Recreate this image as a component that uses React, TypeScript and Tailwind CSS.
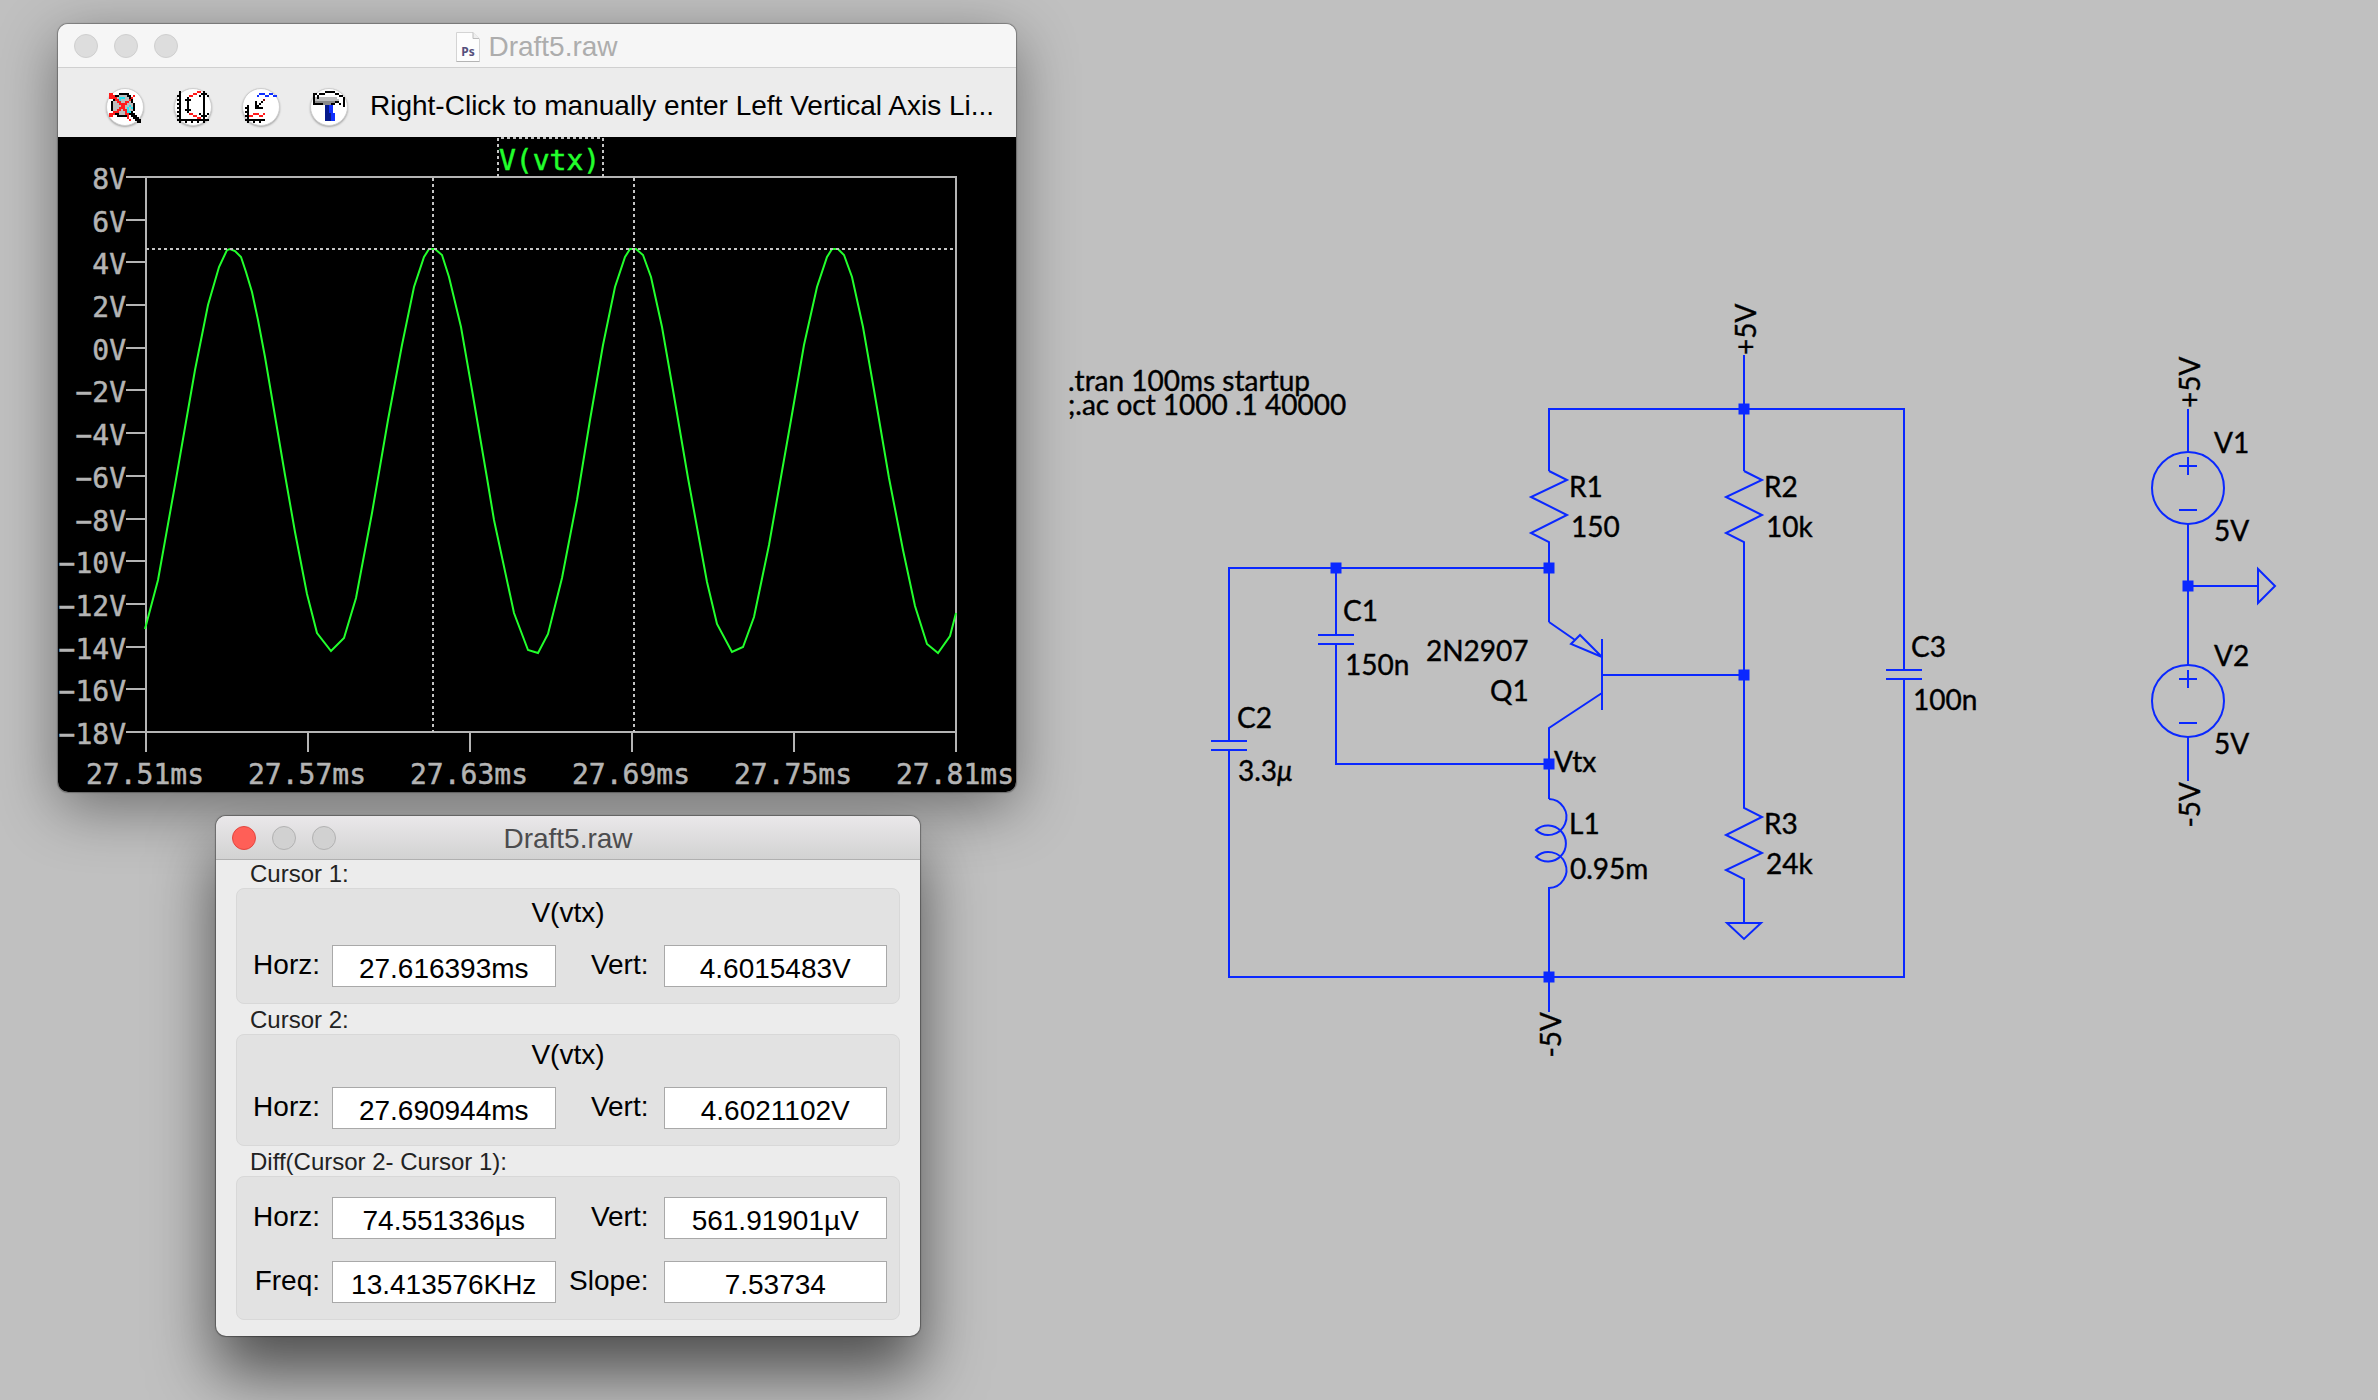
import type { ReactNode } from 'react'

const palette: Record<string, string> = {
    k: '#000000',
    r: '#ff1a1a',
    g: '#bdbdbd',
    d: '#8a8a8a',
    c: '#22e5f2',
    b: '#1030ff',
    n: '#061a8c',
    m: '#7a1010',
    w: '#ffffff',
}

const zoomIcon = [
    '................',
    'rr...kkkkk......',
    'rrrkkggggkk.r...',
    'rrrrgcccggkr....',
    '..krrcggggrk....',
    '.kggrrggrrgk....',
    '.kgggrrrrgggk...',
    '.kggggrrggcgk...',
    '.kgggrrrgcgck...',
    '.kggrrgrrcggk...',
    '..rrrgggrcck....',
    'rrrkkgggrrkkk...',
    'rr..kkkkkr.kkk..',
    '.........r..kkk.',
    '..........r..kkk',
    '..............kk',
]

const axesIcon = [
    '.k........rr.k..',
    '.k......rr..kkk.',
    'kk....rr...k.k.k',
    '.k...k.......k..',
    'kk..kkk......k..',
    '.k...k.......k..',
    'kk...k.......k..',
    '.k...k.......k..',
    'kk...k.......k..',
    '.k..kkk......k..',
    'kk...k.......k..',
    '.k....rr...k.k.k',
    'kk......rr..kkk.',
    '.k........rr.k..',
    'kkkkkkkkkkkkkkkk',
    '.k..k..k..k..k..',
]

const autoIcon = [
    '................',
    '.......bbb..bb..',
    '......b...bb..bb',
    '................',
    '.........m......',
    '.....k..k.......',
    '.....k.k........',
    '.k...kk.........',
    'kk...kkkk.......',
    '.k..............',
    'kk..............',
    '.k..rrr..r......',
    'kkrr...rr.......',
    '.k..............',
    'kkkkkkkkkk......',
    '.k..k..k........',
]

const hammerIcon = [
    '......kkkkk.....',
    'kk.kkkwwwwwkk...',
    'kwkwwwwwwwwwwkk.',
    'kgkgggggggggwwwk',
    'kggggggggggggwwk',
    'kddddddddddkkwwk',
    'kkkkkddddkk..kwk',
    '......nnbb.....k',
    '......nnbb......',
    '......nnbb......',
    '......nnbb......',
    '......nnnbb.....',
    '......nnnbb.....',
    '......nnnbb.....',
    '......nnnbb.....',
    '................',
]

const tools = [
    { name: 'Zoom to fit', rows: zoomIcon },
    { name: 'Pick visible traces', rows: axesIcon },
    { name: 'Autorange', rows: autoIcon },
    { name: 'Control panel', rows: hammerIcon },
]

function PixelIcon({ rows }: { rows: string[] }) {
    return (
        <svg viewBox="0 0 16 16" className="h-8 w-8" shapeRendering="crispEdges" aria-hidden="true">
            {rows.flatMap((row, y) =>
                [...row].map((ch, x) =>
                    palette[ch] ? <rect key={`${x}-${y}`} x={x} y={y} width="1" height="1" fill={palette[ch]} /> : null
                )
            )}
        </svg>
    )
}

function TitleBar({ active, children }: { active?: boolean; children: ReactNode }) {
    const light = active ? 'border-[#b2b2b2] bg-[#d1d1d1]' : 'border-[#cfcfcf] bg-[#dddddd]'
    return (
        <header
            className={
                active
                    ? 'grid h-11 grid-cols-[1fr_auto_1fr] items-center rounded-t-[10px] border-b border-[#b0b0b0] bg-linear-to-b from-[#eae8ea] to-[#d2d2d2] px-4 text-[#4c4c4e]'
                    : 'grid h-11 grid-cols-[1fr_auto_1fr] items-center rounded-t-[10px] border-b border-[#d0d0d0] bg-[#f6f6f6] px-4 text-[#adadad]'
            }
        >
            <div className="flex gap-4">
                <button
                    aria-label="Close"
                    className={`size-6 rounded-full border ${active ? 'border-[#e2463f] bg-[#ff5f57]' : light}`}
                />
                <button aria-label="Minimize" className={`size-6 rounded-full border ${light}`} />
                <button aria-label="Zoom" className={`size-6 rounded-full border ${light}`} />
            </div>
            <h2 className="flex items-center gap-2 pt-0.5 text-[28px] leading-9">{children}</h2>
        </header>
    )
}

function DocIcon() {
    return (
        <svg width="24" height="30" viewBox="0 0 24 30" aria-hidden="true">
            <path d="M0.5 0.5H17L23.5 7V29.5H0.5Z" fill="#fdfdfd" stroke="#d4d4d4" />
            <path d="M17 0.5V6.5H23" fill="#eeeeee" stroke="#bdbdbd" />
            <path d="M0.5 29.5H23.5" stroke="#b4b4b4" />
            <text x="12" y="24" textAnchor="middle" fontSize="12" fontWeight="700" fill="#55507c" fontFamily="Noto Sans, sans-serif">
                Ps
            </text>
        </svg>
    )
}

const trace =
    '145,629 158,580 175,485 195,370 208,305 219,267 227,250 230,249 235,251 241,257 246,272 252,292 258,320 265,357 ' +
    '285,475 295,532 307,594 317,633 331,651 344,638 356,598 372,513 388,420 402,345 414,287 424,257 429,249 435,249 ' +
    '442,255 449,277 461,327 472,390 487,478 494,520 514,613 528,650 538,653 548,634 562,578 577,500 590,420 603,345 ' +
    '615,287 625,257 630,249 636,249 643,255 651,277 662,327 673,390 688,478 707,582 717,624 732,652 743,647 ' +
    '754,617 769,545 791,420 804,345 817,287 827,257 832,249 838,249 844,255 852,277 863,327 874,390 889,478 ' +
    '903,550 915,606 927,644 938,653 950,636 956,613'

const volts = [8, 6, 4, 2, 0, -2, -4, -6, -8, -10, -12, -14, -16, -18]
const times = ['27.51ms', '27.57ms', '27.63ms', '27.69ms', '27.75ms', '27.81ms']

function Plot() {
    const yOf = (v: number) => Math.round(177 + ((8 - v) * 555) / 26)
    return (
        <svg
            viewBox="58 137 958 655"
            className="block h-auto w-full rounded-b-[10px] bg-black font-['DejaVu_Sans_Mono',monospace] text-[28px]"
            role="img"
            aria-label="V(vtx) over time"
        >
            <g stroke="#b4b4b4" strokeWidth="2" fill="none">
                <rect x="146" y="177" width="810" height="555" />
                {volts.map((v) => (
                    <path key={v} d={`M126 ${yOf(v)}H146`} />
                ))}
                {times.map((t, i) => (
                    <path key={t} d={`M${146 + i * 162} 732V752`} />
                ))}
            </g>
            <polyline points={trace} fill="none" stroke="#22ff2c" strokeWidth="2" />
            <g stroke="#c4c4c4" strokeWidth="2" strokeDasharray="3 3" fill="none">
                <path d="M146 249H956" />
                <path d="M433 178V732" />
                <path d="M634 178V732" />
                <path d="M498 177V138H603V177" />
            </g>
            <g fill="#b4b4b4" stroke="#b4b4b4" strokeWidth="0.5" textAnchor="end">
                {volts.map((v) => (
                    <text key={v} x="126" y={yOf(v) + 12}>
                        {`${v < 0 ? '−' : ''}${Math.abs(v)}V`}
                    </text>
                ))}
            </g>
            <g fill="#b4b4b4" stroke="#b4b4b4" strokeWidth="0.5" textAnchor="middle">
                {times.map((t, i) => (
                    <text key={t} x={145 + i * 162} y="784">
                        {t}
                    </text>
                ))}
            </g>
            <text x="499" y="170" fill="#22ff2c" stroke="#22ff2c" strokeWidth="0.5">
                V(vtx)
            </text>
        </svg>
    )
}

function Field({ id, label, value, right }: { id: string; label: string; value: string; right?: boolean }) {
    return (
        <>
            <label htmlFor={id} className={right ? 'pt-0.5 pr-[3px] text-right' : 'pt-0.5 text-right'}>
                {label}
            </label>
            <input
                id={id}
                defaultValue={value}
                className="h-[42px] w-full min-w-0 border border-[#a9a9a9] bg-white pt-1.5 text-center outline-none"
            />
        </>
    )
}

function Group({ title, className, children }: { title: string; className: string; children: ReactNode }) {
    return (
        <section>
            <h3 className="px-3.5 text-2xl leading-7 text-[#222222]">{title}</h3>
            <div className={`rounded-lg border border-[#d8d8d8] bg-[#e2e2e2] ${className}`}>{children}</div>
        </section>
    )
}

const fieldGrid = 'grid grid-cols-[83px_1fr_84px_1fr] gap-x-3 gap-y-[22px] pr-3'

const nodes = [
    [1744, 409],
    [1549, 568],
    [1336, 568],
    [1744, 675],
    [1549, 764],
    [1549, 977],
    [2188, 586],
]

const labels: [number, number, string][] = [
    [1068, 391, '.tran 100ms startup'],
    [1068, 415, ';.ac oct 1000 .1 40000'],
    [1569, 497, 'R1'],
    [1571, 537, '150'],
    [1343, 621, 'C1'],
    [1345, 675, '150n'],
    [1426, 661, '2N2907'],
    [1490, 701, 'Q1'],
    [1554, 772, 'Vtx'],
    [1569, 834, 'L1'],
    [1570, 879, '0.95m'],
    [1237, 728, 'C2'],
    [1238, 781, '3.3'],
    [1764, 497, 'R2'],
    [1766, 537, '10k'],
    [1764, 834, 'R3'],
    [1766, 874, '24k'],
    [1911, 657, 'C3'],
    [1913, 710, '100n'],
    [2214, 453, 'V1'],
    [2214, 541, '5V'],
    [2214, 666, 'V2'],
    [2214, 754, '5V'],
]

function Schematic() {
    return (
        <svg
            viewBox="1040 0 1338 1400"
            className="block h-auto w-full font-['Lato',sans-serif] text-[28px]"
            role="img"
            aria-label="Oscillator schematic"
        >
            <g stroke="#0a28ff" strokeWidth="2" fill="none">
                {/* supply rails */}
                <path d="M1744 355V471M1549 471V409H1904V670M1886 670H1922M1886 679H1922M1904 679V977H1229V750" />
                <path d="M1211 741H1247M1211 750H1247M1229 741V568H1549" />
                {/* R1, R2, R3 */}
                <path d="M1549 471L1567 480L1531 497L1567 515L1531 533L1549 542V622" />
                <path d="M1744 471L1762 480L1726 497L1762 515L1726 533L1744 542V808L1762 817L1726 835L1762 853L1726 870L1744 879V923" />
                <path d="M1727 923H1761L1744 939Z" />
                {/* C1 */}
                <path d="M1336 568V635M1318 635H1354M1318 644H1354M1336 644V764H1549" />
                {/* Q1 */}
                <path d="M1549 622L1575 640M1580 635L1571 644L1602 657ZM1602 639V710M1602 675H1744M1602 693L1549 728V799" />
                {/* L1 */}
                <path d="M1549 799A18 18 0 1 1 1536 830A18 18 0 1 1 1536 857A18 18 0 1 1 1549 888V1012" />
                {/* V1, V2 */}
                <path d="M2188 409V453M2188 524V666M2188 737V781M2188 586H2258M2258 569V603L2275 586Z" />
                <circle cx="2188" cy="488" r="36" />
                <circle cx="2188" cy="701" r="36" />
                <path d="M2179 466H2197M2188 457V475M2179 510H2197M2179 679H2197M2188 670V688M2179 723H2197" />
            </g>
            <g fill="#0a28ff">
                {nodes.map(([x, y]) => (
                    <rect key={`${x}-${y}`} x={x - 5.5} y={y - 5.5} width="11" height="11" />
                ))}
            </g>
            <g fill="#000000" stroke="#000000" strokeWidth="0.4">
                {labels.map(([x, y, text]) => (
                    <text key={`${x}-${y}`} x={x} y={y}>
                        {text}
                        {text === '3.3' && <tspan fontStyle="italic">μ</tspan>}
                    </text>
                ))}
                <text transform="translate(1756 355) rotate(-90)">+5V</text>
                <text transform="translate(2200 408) rotate(-90)">+5V</text>
                <text transform="translate(1561 1012) rotate(-90)" textAnchor="end">
                    -5V
                </text>
                <text transform="translate(2200 782) rotate(-90)" textAnchor="end">
                    -5V
                </text>
            </g>
        </svg>
    )
}

export default function App() {
    return (
        <main className="flex min-h-screen items-start overflow-hidden bg-[#c0c0c0] font-['Liberation_Sans',Arial,sans-serif] text-[28px] leading-9 text-black">
            <div className="w-[1040px] shrink-0 pt-6 pr-6 pl-[58px]">
                <section className="rounded-[10px] bg-[#ececec] shadow-[0_0_1px_1px_rgba(0,0,0,0.3),0_16px_60px_rgba(0,0,0,0.42)]">
                    <TitleBar>
                        <DocIcon />
                        Draft5.raw
                    </TitleBar>
                    <div className="flex h-[69px] items-start pt-5 pl-12">
                        <div className="flex gap-[30px]">
                            {tools.map((tool) => (
                                <button
                                    key={tool.name}
                                    aria-label={tool.name}
                                    className="flex size-[38px] items-center justify-center rounded-full border border-[#cfcfcf] bg-white shadow-[0_1px_2px_rgba(0,0,0,0.3)]"
                                >
                                    <span className="block shrink-0">
                                        <PixelIcon rows={tool.rows} />
                                    </span>
                                </button>
                            ))}
                        </div>
                        <p className="ml-[22px] whitespace-nowrap">Right-Click to manually enter Left Vertical Axis Li...</p>
                    </div>
                    <Plot />
                </section>

                <section className="relative mt-6 ml-[158px] w-[704px] rounded-[10px] bg-[#ececec] shadow-[0_0_1px_1px_rgba(0,0,0,0.35),0_36px_64px_rgba(0,0,0,0.6)]">
                    <TitleBar active>Draft5.raw</TitleBar>
                    <form className="flex flex-col gap-0.5 px-5 pb-4">
                        <Group title="Cursor 1:" className="pt-1.5 pb-4">
                            <p className="mb-3.5 text-center">V(vtx)</p>
                            <div className={fieldGrid}>
                                <Field id="c1-horz" label="Horz:" value="27.616393ms" />
                                <Field id="c1-vert" label="Vert:" value="4.6015483V" right />
                            </div>
                        </Group>
                        <Group title="Cursor 2:" className="pt-0.5 pb-4">
                            <p className="mb-3.5 text-center">V(vtx)</p>
                            <div className={fieldGrid}>
                                <Field id="c2-horz" label="Horz:" value="27.690944ms" />
                                <Field id="c2-vert" label="Vert:" value="4.6021102V" right />
                            </div>
                        </Group>
                        <Group title="Diff(Cursor 2- Cursor 1):" className="pt-5 pb-4">
                            <div className={fieldGrid}>
                                <Field id="diff-horz" label="Horz:" value="74.551336µs" />
                                <Field id="diff-vert" label="Vert:" value="561.91901µV" right />
                                <Field id="diff-freq" label="Freq:" value="13.413576KHz" />
                                <Field id="diff-slope" label="Slope:" value="7.53734" right />
                            </div>
                        </Group>
                    </form>
                </section>
            </div>
            <div className="min-w-0 flex-1">
                <Schematic />
            </div>
        </main>
    )
}
